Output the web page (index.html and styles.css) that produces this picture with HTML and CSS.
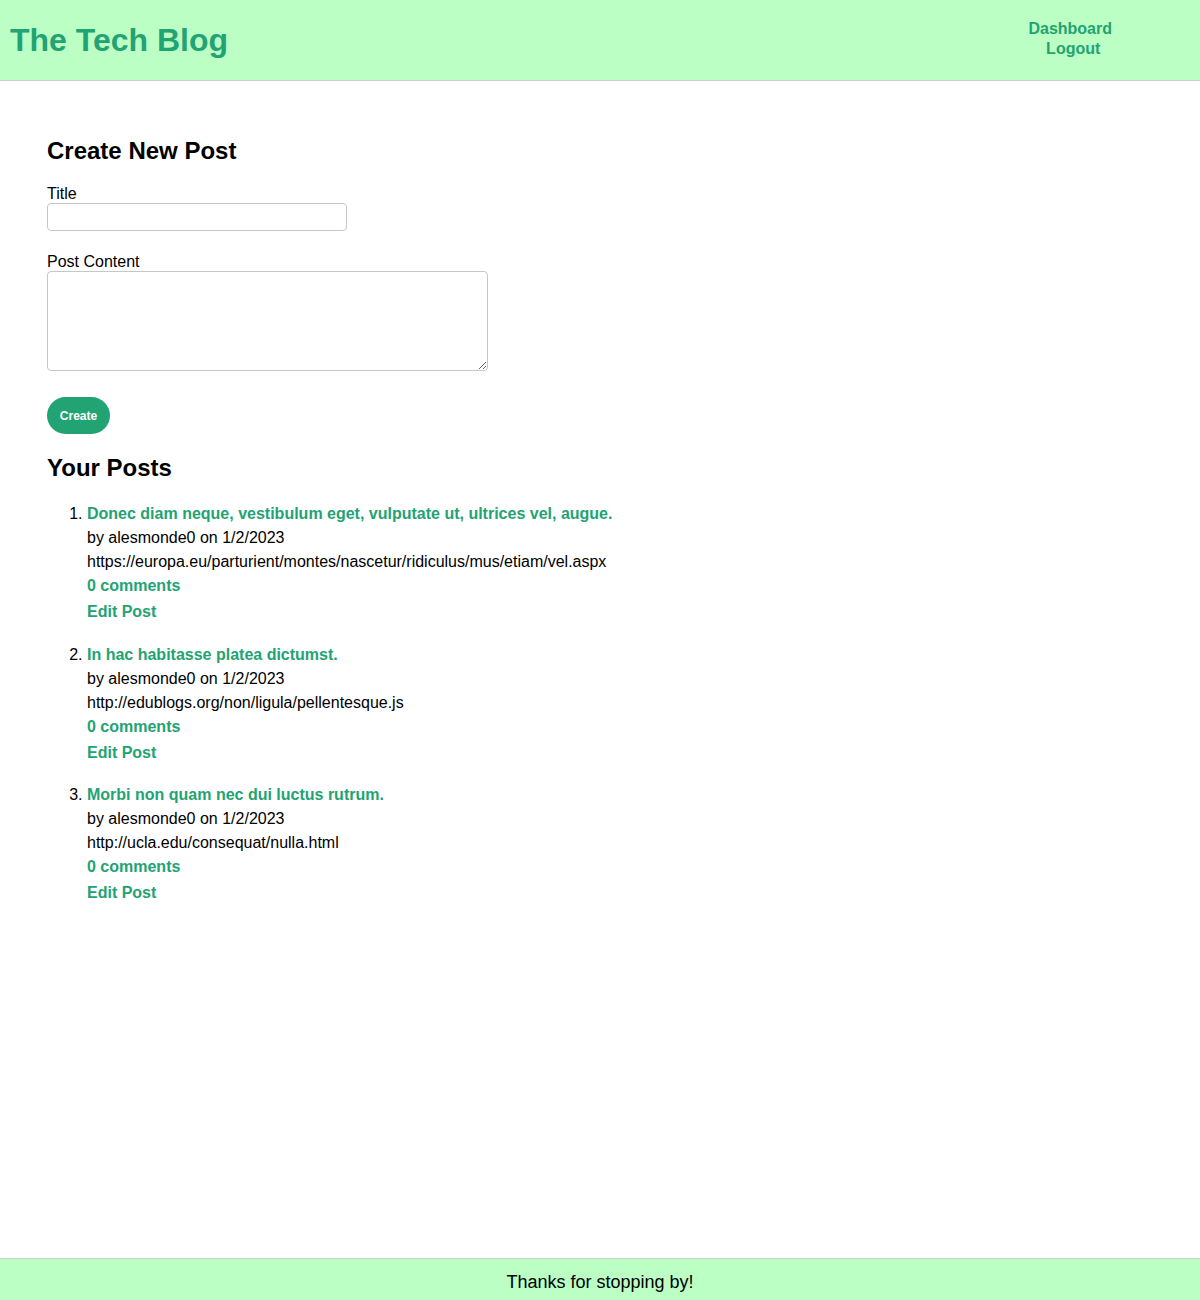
FILE: index.html
```html
<!DOCTYPE html>
<html>
<head>
<meta charset="utf-8">
<title>The Tech Blog</title>
<link rel="stylesheet" href="styles.css">
</head>
<body>
<header class="site-header">
  <h1 class="brand"><a href="#">The Tech Blog</a></h1>
  <nav class="nav">
    <a href="#">Dashboard</a>
    <a class="nav-logout" href="#">Logout</a>
  </nav>
</header>
<main class="main">
  <section class="new-post">
    <h2 class="section-title">Create New Post</h2>
    <form class="post-form">
      <label class="field">
        <span class="field-label">Title</span>
        <input class="input" type="text">
      </label>
      <label class="field">
        <span class="field-label">Post Content</span>
        <textarea class="textarea"></textarea>
      </label>
      <button class="btn" type="button">Create</button>
    </form>
  </section>
  <section class="your-posts">
    <h2 class="section-title">Your Posts</h2>
    <ol class="post-list">
      <li class="post">
        <a class="post-title" href="#">Donec diam neque, vestibulum eget, vulputate ut, ultrices vel, augue.</a>
        <p class="post-meta">by alesmonde0 on 1/2/2023</p>
        <p class="post-body">https://europa.eu/parturient/montes/nascetur/ridiculus/mus/etiam/vel.aspx</p>
        <a class="post-link" href="#">0 comments</a>
        <a class="post-link edit" href="#">Edit Post</a>
      </li>
      <li class="post">
        <a class="post-title" href="#">In hac habitasse platea dictumst.</a>
        <p class="post-meta">by alesmonde0 on 1/2/2023</p>
        <p class="post-body">http://edublogs.org/non/ligula/pellentesque.js</p>
        <a class="post-link" href="#">0 comments</a>
        <a class="post-link edit" href="#">Edit Post</a>
      </li>
      <li class="post">
        <a class="post-title" href="#">Morbi non quam nec dui luctus rutrum.</a>
        <p class="post-meta">by alesmonde0 on 1/2/2023</p>
        <p class="post-body">http://ucla.edu/consequat/nulla.html</p>
        <a class="post-link" href="#">0 comments</a>
        <a class="post-link edit" href="#">Edit Post</a>
      </li>
    </ol>
  </section>
</main>
<footer class="site-footer">Thanks for stopping by!</footer>
</body>
</html>
```

FILE: styles.css
```css
* { box-sizing: border-box; }
html, body { margin: 0; padding: 0; }
body {
  font-family: "Liberation Sans", Arial, sans-serif;
  color: #000;
  font-size: 16px;
  background: #fff;
  min-height: 1300px;
}
a { color: #22a373; text-decoration: none; font-weight: bold; }

.site-header {
  height: 81px;
  background: #bbffc5;
  border-bottom: 1px solid #cccccc;
  display: flex;
  align-items: center;
  justify-content: space-between;
  padding: 0 88px 0 10px;
}
.brand { margin: 0; font-size: 32px; line-height: 1; }
.brand a { color: #22a373; }
.nav {
  display: flex;
  flex-direction: column;
  align-items: center;
  line-height: 20px;
  margin-top: -2px;
}
.nav a { font-size: 16px; }
.nav-logout { margin-left: 6px; }

.main { padding: 55px 47px 0; }
.section-title { margin: 0; font-size: 24px; line-height: 30px; }
.post-form { margin-top: 19px; display: flex; flex-direction: column; align-items: flex-start; }
.field { display: flex; flex-direction: column; margin-bottom: 22px; }
.field-label { line-height: 18px; }
.input {
  width: 300px; height: 28px;
  border: 1px solid #c6c6c6; border-radius: 4px;
  font: inherit; padding: 2px 6px;
}
.textarea {
  width: 441px; height: 100px;
  border: 1px solid #c6c6c6; border-radius: 4px;
  font: inherit; padding: 4px 6px;
}
.field + .field { margin-bottom: 26px; }
.btn {
  background: #22a373; color: #fff; border: 0;
  border-radius: 19px; height: 37px; width: 63px;
  font: bold 12px "Liberation Sans", Arial, sans-serif;
  padding: 0;
}
.your-posts { margin-top: 19px; }
.post-list { margin: 19px 0 0; padding-left: 40px; }
.post { margin-bottom: 16.5px; line-height: 24px; }
.post p { margin: 0; }
.post-title, .post-link { display: block; }
.post-link.edit { line-height: 28px; }

.site-footer {
  position: fixed; left: 0; right: 0; bottom: 0;
  height: 42px;
  background: #bbffc5;
  border-top: 1px solid #cccccc;
  padding-top: 13px;
  text-align: center;
  font-size: 18px;
  line-height: 21px;
}
```
